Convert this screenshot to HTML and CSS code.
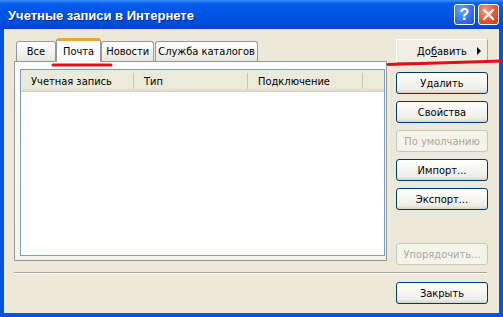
FILE: index.html
```html
<!DOCTYPE html>
<html lang="ru">
<head>
  <meta charset="UTF-8" />
  <title>Учетные записи в Интернете</title>
  <link rel="stylesheet" href="styles.css">
</head>
<body>
  <div class="window">
    <div class="titlebar">
      <span class="title">Учетные записи в Интернете</span>
      <div class="caption-buttons">
        <span class="cap-btn help">?</span>
        <span class="cap-btn close">
          <svg width="13" height="13" viewBox="0 0 13 13">
            <path d="M2 2 L11 11 M11 2 L2 11" stroke="#fff" stroke-width="2.2" stroke-linecap="round" />
          </svg>
        </span>
      </div>
    </div>

    <div class="client">
      <div class="main">
        <div class="tabs-area">
          <div class="tabs">
            <div class="tab tab-first">Все</div>
            <div class="tab active">Почта</div>
            <div class="tab">Новости</div>
            <div class="tab tab-last">Служба каталогов</div>
          </div>
          <div class="panel">
            <div class="listview">
              <div class="lv-header">
                <div class="col col-account">Учетная запись</div>
                <div class="col col-type">Тип</div>
                <div class="col col-conn">Подключение</div>
              </div>
            </div>
          </div>
        </div>

        <div class="side">
          <button class="btn btn-flat">До<u>б</u>авить<span class="arrow"></span></button>
          <button class="btn">Удалить</button>
          <button class="btn">Свойства</button>
          <button class="btn" disabled>По умолчанию</button>
          <button class="btn">Импорт...</button>
          <button class="btn">Экспорт...</button>
          <button class="btn btn-order" disabled>Упорядочить...</button>
        </div>
      </div>

      <div class="separator"></div>

      <div class="footer">
        <button class="btn">Закрыть</button>
      </div>
    </div>

    <!-- red marker strokes drawn over the dialog -->
    <svg class="marks" width="503" height="317" viewBox="0 0 503 317">
      <path d="M53 65 L111 65" stroke="#e3101c" stroke-width="3" stroke-linecap="round" />
      <path d="M388 64.5 L503 61" stroke="#e3101c" stroke-width="3" stroke-linecap="round" />
    </svg>
  </div>
</body>
</html>
```

FILE: styles.css
```css
* {
  box-sizing: border-box;
}

body {
  margin: 0;
  padding: 0;
  background: #ece9d8;
}

.window {
  position: relative;
  width: 503px;
  height: 317px;
  display: flex;
  flex-direction: column;
  background: #0553e0;
  font-family: "DejaVu Sans Condensed", "Liberation Sans", sans-serif;
  font-size: 11px;
  color: #000;
}

.titlebar {
  height: 29px;
  flex: none;
  display: flex;
  align-items: center;
  justify-content: space-between;
  padding: 1px 4px 0 8px;
  background: linear-gradient(#3d8ef8 0, #0a61ec 3px, #0057e6 8px, #0054e3 50%, #004cd9 85%, #0044cc 100%);
}

.title {
  font-family: "Liberation Sans", sans-serif;
  font-weight: bold;
  font-size: 13px;
  color: #fff;
  text-shadow: 1px 1px #0a2a8a;
}

.caption-buttons {
  display: flex;
  gap: 3px;
  margin-top: -1px;
}

.cap-btn {
  width: 21px;
  height: 21px;
  border: 1px solid #fff;
  border-radius: 3px;
  display: flex;
  align-items: center;
  justify-content: center;
  color: #fff;
}

.cap-btn.help {
  background: radial-gradient(circle at 35% 30%, #6fa2ff, #2f6ef0 60%, #1b50d6);
  font-family: "Liberation Sans", sans-serif;
  font-weight: bold;
  font-size: 16px;
}

.cap-btn.close {
  background: radial-gradient(circle at 35% 30%, #f3a08a, #e2562f 55%, #c53d1d);
}

.client {
  flex: 1;
  margin: 0 4px 4px 4px;
  background: #ece9d8;
  padding: 9px 11px 0 10px;
  display: flex;
  flex-direction: column;
}

.main {
  display: flex;
  gap: 9px;
}

.tabs-area {
  width: 373px;
  display: flex;
  flex-direction: column;
}

.tabs {
  height: 23px;
  display: flex;
  align-items: flex-end;
  padding-left: 2px;
  position: relative;
  z-index: 1;
}

.tab {
  height: 20px;
  padding: 0 4px;
  margin-right: 1px;
  display: flex;
  align-items: center;
  justify-content: center;
  border: 1px solid #919b9c;
  border-bottom: none;
  border-radius: 3px 3px 0 0;
  background: linear-gradient(#fff, #f3f2ec 60%, #e6e4da);
  white-space: nowrap;
}

.tab-first {
  min-width: 40px;
}

.tab-last {
  padding: 0 2px;
}

.tab.active {
  height: 24px;
  margin: 0 -1px -1px -1px;
  padding: 0 6px;
  border-top: 3px solid #f3a531;
  background: #fcfcfe;
  position: relative;
}

.tab.active + .tab {
  margin-left: 1px;
}

.panel {
  height: 200px;
  border: 1px solid #919b9c;
  background: linear-gradient(#fcfcfe, #f4f3ee);
  padding: 7px 1px 4px 5px;
}

.listview {
  height: 100%;
  border: 1px solid #7f9db9;
  background: #fff;
}

.lv-header {
  height: 22px;
  display: flex;
  background: linear-gradient(#ebeadb 80%, #e2e1d3 90%, #d6d3c4);
}

.col {
  padding-left: 10px;
  display: flex;
  align-items: center;
  border-right: 1px solid #cbc7b8;
  margin: 3px 0;
  color: #000;
}

.col-account {
  width: 113px;
}

.col-type {
  width: 114px;
}

.col-conn {
  width: 115px;
}

.side {
  width: 92px;
  display: flex;
  flex-direction: column;
  gap: 7px;
  padding-top: 1px;
}

.btn {
  height: 22px;
  width: 92px;
  border: 1px solid #003c74;
  border-radius: 3px;
  background: linear-gradient(#ffffff, #f4f3ee 60%, #ecebe6 85%, #d6d0c5);
  font-family: inherit;
  font-size: 11px;
  color: #000;
  padding: 0;
}

.btn:disabled {
  border-color: #c9c7ba;
  background: #f5f4ea;
  color: #aca899;
}

.btn-flat {
  height: 24px;
  border-radius: 0;
  border: 1px solid;
  border-color: #fff #aca899 #aca899 #fff;
  background: #f1efe4;
  position: relative;
  margin-bottom: 2px;
}

.arrow {
  position: absolute;
  right: 6px;
  top: 7px;
  width: 0;
  height: 0;
  border-left: 4px solid #000;
  border-top: 4px solid transparent;
  border-bottom: 4px solid transparent;
}

.btn-order {
  margin-top: 26px;
}

.separator {
  margin: 7px 1px 0 0;
  height: 2px;
  border-top: 1px solid #aca899;
  border-bottom: 1px solid #fff;
}

.footer {
  display: flex;
  justify-content: flex-end;
  margin-top: 8px;
}

.marks {
  position: absolute;
  left: 0;
  top: 0;
  pointer-events: none;
}
```
